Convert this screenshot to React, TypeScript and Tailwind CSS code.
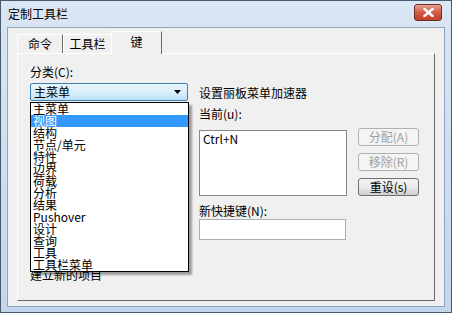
import React from 'react'

const font = { fontFamily: '"Noto Sans CJK SC", "Liberation Sans", sans-serif' }

const categories = [
  '主菜单',
  '视图',
  '结构',
  '节点/单元',
  '特性',
  '边界',
  '荷载',
  '分析',
  '结果',
  'Pushover',
  '设计',
  '查询',
  '工具',
  '工具栏菜单',
]

function Tab({ label, active, first }: { label: string; active?: boolean; first?: boolean }) {
  if (active) {
    return (
      <div className="relative z-10 -mb-px ml-[-1px] flex h-[23px] w-[51px] items-center justify-center border border-b-0 border-l-[#ffffff] border-r-[#696969] border-t-[#ffffff] bg-[#f0f0f0] pb-[2px] text-[12px]">
        {label}
      </div>
    )
  }
  return (
    <div
      className={
        'mt-[3px] flex h-[19px] items-center justify-center border border-b-0 border-l-[#ffffff] border-r-[#696969] border-t-[#ffffff] bg-[#f0f0f0] text-[12px] ' +
        (first ? 'w-[46px]' : 'w-[49px]')
      }
    >
      {label}
    </div>
  )
}

function Button({ label, disabled }: { label: string; disabled?: boolean }) {
  return (
    <div
      className={
        'flex h-[18px] w-[61px] items-center justify-center rounded-[3px] border text-[12px] ' +
        (disabled
          ? 'border-[#adb2b5] bg-[#f4f4f4] text-[#a0a0a0]'
          : 'border-[#707070] bg-gradient-to-b from-[#f2f2f2] via-[#ebebeb] to-[#cfcfcf] text-black')
      }
    >
      {label}
    </div>
  )
}

export default function App() {
  return (
    <div className="relative h-[313px] w-[452px] overflow-hidden text-black" style={font}>
      {/* window frame */}
      <div className="flex h-full w-full flex-col border border-[#4a5a6e] bg-gradient-to-b from-[#dbe6f4] to-[#c3d6ec] px-[6px] pb-[5px]">
        {/* title bar */}
        <div className="flex h-[26px] shrink-0 items-center justify-between">
          <span className="pl-px text-[12px] leading-none">定制工具栏</span>
          <div className="mb-[3px] mr-[3px] flex h-[17px] w-[28px] items-center justify-center rounded-[3px] border border-[#6d2b25] bg-gradient-to-b from-[#e6a291] via-[#cf5a46] to-[#c0402c]">
            <svg width="11" height="9" viewBox="0 0 11 9">
              <path d="M1.5 1 L9.5 8 M9.5 1 L1.5 8" stroke="#fff" strokeWidth="2.4" strokeLinecap="square" />
            </svg>
          </div>
        </div>

        {/* client area */}
        <div className="flex flex-1 flex-col border border-[#8ea5c2] bg-[#f0f0f0] px-[9px] pb-[5px] pt-[2px]">
          {/* tabs */}
          <div className="flex h-[23px] items-end">
            <Tab label="命令" first />
            <Tab label="工具栏" />
            <Tab label="键" active />
          </div>

          {/* panel */}
          <div className="flex flex-1 border border-l-[#ffffff] border-t-[#ffffff] border-r-[#696969] border-b-[#696969] pl-[12px] pt-[11px]">
            {/* left column */}
            <div className="flex w-[158px] flex-col">
              <div className="h-[14px] text-[12px] leading-[14px]">分类(C):</div>
              <div className="mt-[4px] flex h-[18px] items-center justify-between rounded-[2px] border border-[#3c7fb1] bg-gradient-to-b from-[#eaf5fd] via-[#d9effc] to-[#bde0f6] pl-[3px] pr-[5px]">
                <span className="text-[12px] leading-none">主菜单</span>
                <svg width="8" height="4" viewBox="0 0 8 4">
                  <path d="M0 0 H7 L3.5 4 Z" fill="#000" />
                </svg>
              </div>
              <div className="mt-[168px] text-[12px] leading-[12px]">建立新的项目</div>
            </div>

            {/* right column */}
            <div className="ml-[11px] flex flex-col">
              <div className="mt-[21px] text-[12px] leading-[14px]">设置丽板菜单加速器</div>
              <div className="mt-[7px] text-[12px] leading-[14px]">当前(u):</div>
              <div className="mt-[9px] flex">
                <div className="h-[66px] w-[148px] border border-[#828790] bg-white pl-[3px] pt-[1px] text-[12px] leading-[14px]">
                  Ctrl+N
                </div>
                <div className="-mt-[2px] ml-[11px] flex flex-col gap-[7px]">
                  <Button label="分配(A)" disabled />
                  <Button label="移除(R)" disabled />
                  <Button label="重设(s)" />
                </div>
              </div>
              <div className="mt-[8px] text-[12px] leading-[14px]">新快捷键(N):</div>
              <div className="mt-px h-[21px] w-[147px] border border-[#abadb3] bg-white" />
            </div>
          </div>
        </div>
      </div>

      {/* opened dropdown list */}
      <div className="absolute left-[30px] top-[102px] w-[159px] border border-[#000000] bg-white shadow-[3px_3px_2px_rgba(0,0,0,0.35)]">
        {categories.map((c, i) => (
          <div
            key={c}
            className={
              'h-[12px] overflow-visible whitespace-nowrap pl-[2px] text-[12px] leading-[12px] ' +
              (i === 1 ? 'bg-[#3399ff] text-white' : 'text-black')
            }
          >
            {c}
          </div>
        ))}
      </div>
    </div>
  )
}
